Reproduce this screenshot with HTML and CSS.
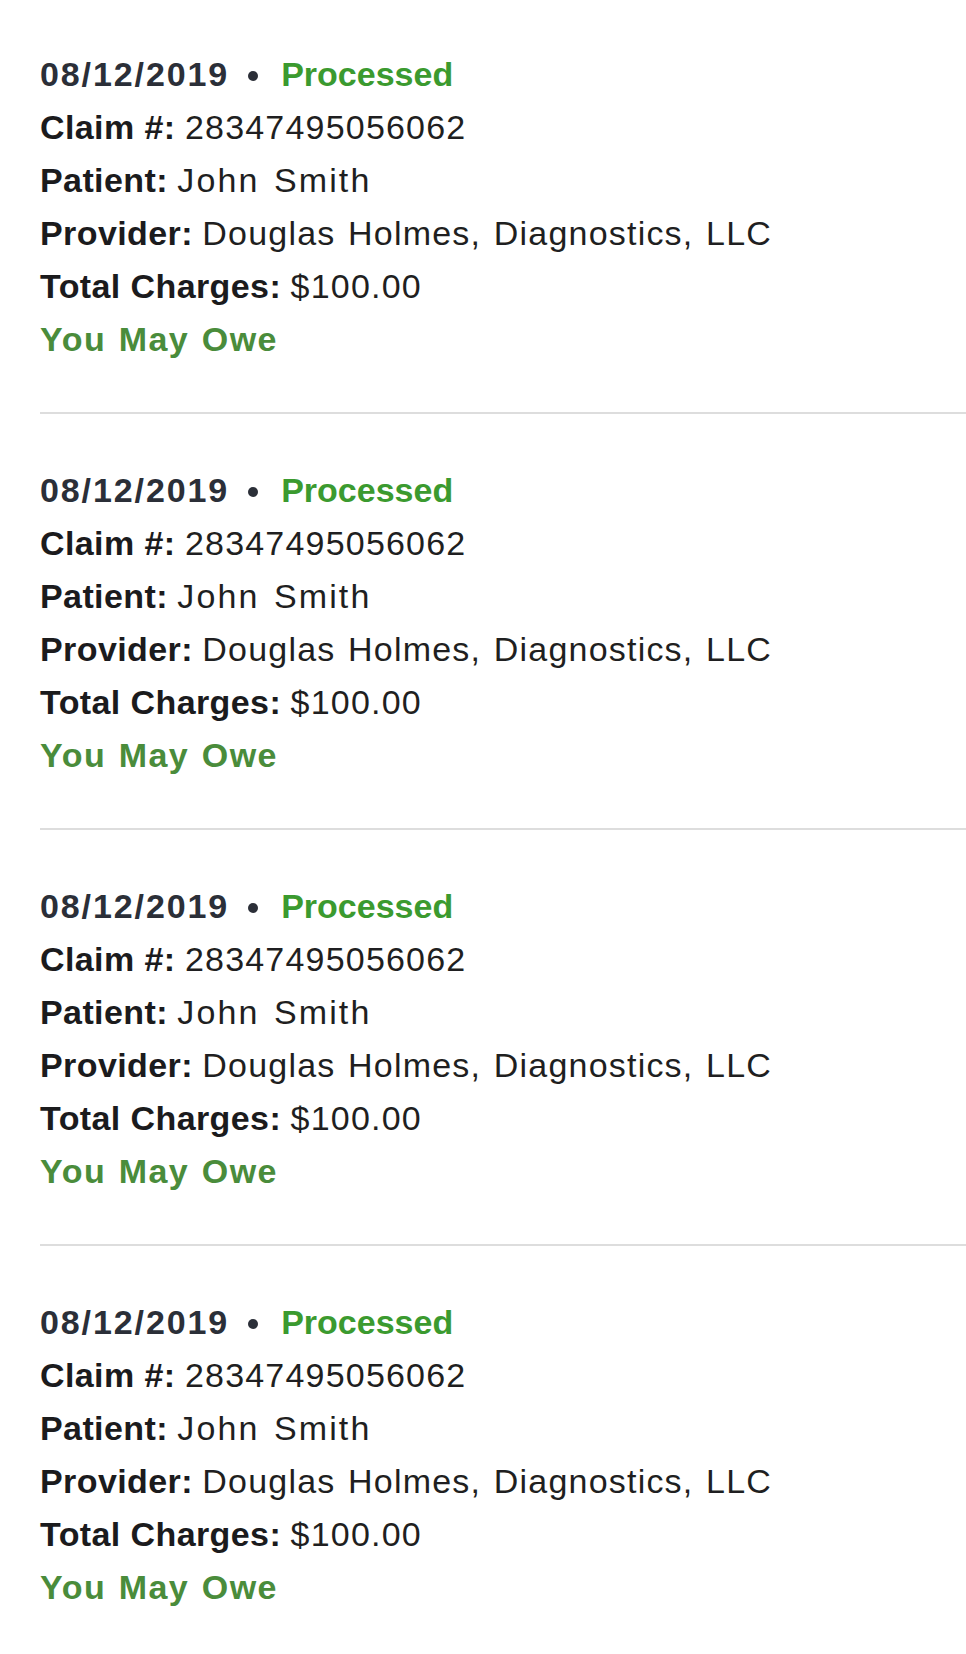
FILE: index.html
```html
<!DOCTYPE html>
<html lang="en">
<head>
<meta charset="utf-8">
<title>Claims</title>
<link rel="stylesheet" href="styles.css">
</head>
<body>
<main class="claims">
  <section class="claim">
    <div class="claim-head"><span class="date">08/12/2019</span><span class="sep" aria-hidden="true"></span><span class="status">Processed</span></div>
    <div class="row"><b>Claim #:</b> <span class="val">28347495056062</span></div>
    <div class="row"><b>Patient:</b> <span class="val name">John Smith</span></div>
    <div class="row"><b>Provider:</b> <span class="val">Douglas Holmes, Diagnostics, LLC</span></div>
    <div class="row"><b>Total Charges:</b> <span class="val">$100.00</span></div>
    <div class="owe">You May Owe</div>
  </section>
  <section class="claim">
    <div class="claim-head"><span class="date">08/12/2019</span><span class="sep" aria-hidden="true"></span><span class="status">Processed</span></div>
    <div class="row"><b>Claim #:</b> <span class="val">28347495056062</span></div>
    <div class="row"><b>Patient:</b> <span class="val name">John Smith</span></div>
    <div class="row"><b>Provider:</b> <span class="val">Douglas Holmes, Diagnostics, LLC</span></div>
    <div class="row"><b>Total Charges:</b> <span class="val">$100.00</span></div>
    <div class="owe">You May Owe</div>
  </section>
  <section class="claim">
    <div class="claim-head"><span class="date">08/12/2019</span><span class="sep" aria-hidden="true"></span><span class="status">Processed</span></div>
    <div class="row"><b>Claim #:</b> <span class="val">28347495056062</span></div>
    <div class="row"><b>Patient:</b> <span class="val name">John Smith</span></div>
    <div class="row"><b>Provider:</b> <span class="val">Douglas Holmes, Diagnostics, LLC</span></div>
    <div class="row"><b>Total Charges:</b> <span class="val">$100.00</span></div>
    <div class="owe">You May Owe</div>
  </section>
  <section class="claim">
    <div class="claim-head"><span class="date">08/12/2019</span><span class="sep" aria-hidden="true"></span><span class="status">Processed</span></div>
    <div class="row"><b>Claim #:</b> <span class="val">28347495056062</span></div>
    <div class="row"><b>Patient:</b> <span class="val name">John Smith</span></div>
    <div class="row"><b>Provider:</b> <span class="val">Douglas Holmes, Diagnostics, LLC</span></div>
    <div class="row"><b>Total Charges:</b> <span class="val">$100.00</span></div>
    <div class="owe">You May Owe</div>
  </section>
</main>
</body>
</html>
```

FILE: styles.css
```css
html, body {
  margin: 0;
  padding: 0;
  background: #ffffff;
}
body {
  font-family: "Liberation Sans", Arial, sans-serif;
  font-size: 34px;
  line-height: 53px;
  color: #1f1f21;
}
.claims {
  padding: 48px 0 0 40px;
}
.claim {
  padding: 50px 0 46px 0;
  border-bottom: 2px solid #dddddd;
}
.claim:first-child {
  padding-top: 0;
}
.claim:last-child {
  border-bottom: none;
}
.claim-head {
  display: flex;
  align-items: baseline;
  font-weight: bold;
}
.date {
  color: #2b2f38;
  letter-spacing: 1.9px;
}
.sep {
  align-self: center;
  width: 10px;
  height: 10px;
  border-radius: 50%;
  background: #2b2f38;
  margin: 2px 23px 0 19px;
}
.status {
  color: #3b9a2f;
}
.row b {
  font-weight: bold;
  color: #1b1b1d;
  letter-spacing: 0.4px;
}
.val {
  letter-spacing: 1.2px;
  word-spacing: 2px;
}
.val.name {
  letter-spacing: 2.1px;
  word-spacing: 3px;
}
.owe {
  font-weight: bold;
  color: #4a8c3b;
  letter-spacing: 1.5px;
  word-spacing: 1.5px;
}
```
